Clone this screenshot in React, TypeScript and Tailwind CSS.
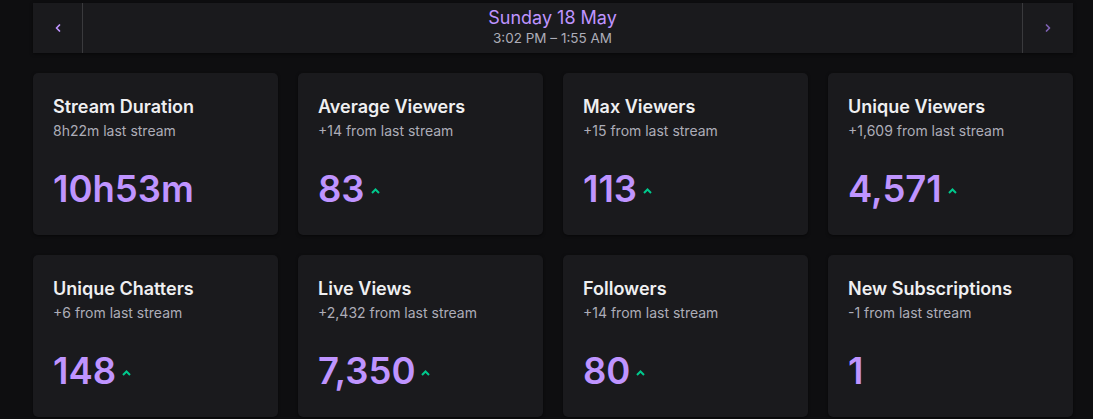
import { ChevronLeft, ChevronRight } from "lucide-react";

interface Stat {
  title: string;
  change: string;
  value: string;
  up?: boolean;
}

const stats: Stat[] = [
  { title: "Stream Duration", change: "8h22m last stream", value: "10h53m" },
  { title: "Average Viewers", change: "+14 from last stream", value: "83", up: true },
  { title: "Max Viewers", change: "+15 from last stream", value: "113", up: true },
  { title: "Unique Viewers", change: "+1,609 from last stream", value: "4,571", up: true },
  { title: "Unique Chatters", change: "+6 from last stream", value: "148", up: true },
  { title: "Live Views", change: "+2,432 from last stream", value: "7,350", up: true },
  { title: "Followers", change: "+14 from last stream", value: "80", up: true },
  { title: "New Subscriptions", change: "-1 from last stream", value: "1" },
];

function UpCaret() {
  return (
    <svg width="9" height="6" viewBox="0 0 9 6" className="ml-[6px] mt-[4px]">
      <path d="M1 5 L4.5 1.5 L8 5" fill="none" stroke="#00c98d" strokeWidth="2" />
    </svg>
  );
}

function StatCard({ stat }: { stat: Stat }) {
  return (
    <div className="bg-[#1a1a1d] rounded-[5px] h-[162px] pl-[20px] pt-[22px] shadow-[0_1px_3px_rgba(0,0,0,0.5)]">
      <h2 className="text-[18px] leading-[23px] font-semibold text-[#efeff1]">{stat.title}</h2>
      <p className="text-[14px] leading-[20px] text-[#adadb8] mt-[3px]">{stat.change}</p>

      <div className="flex items-center mt-[26px]">
        <span className="text-[36.5px] leading-[44px] font-semibold text-[#bf94ff]">{stat.value}</span>
        {stat.up && <UpCaret />}
      </div>
    </div>
  );
}

export default function App() {
  return (
    <div
      className="h-[419px] overflow-hidden bg-[#0e0e10] pl-[33px] pr-[20px] pt-[3px]"
      style={{ fontFamily: "Inter, 'Noto Sans', sans-serif" }}
    >
      <div className="flex h-[50px] bg-[#1a1a1d] shadow-[0_1px_3px_rgba(0,0,0,0.5)]">
        <button className="w-[50px] flex items-center justify-center border-r border-[#3a3a3d] text-[#bf94ff]">
          <ChevronLeft size={12} strokeWidth={3.5} />
        </button>

        <div className="flex-1 flex flex-col items-center justify-center">
          <div className="text-[18px] leading-[22px] text-[#bf94ff] -mt-[2px]">Sunday 18 May</div>
          <div className="text-[13.5px] leading-[18px] text-[#adadb8]">3:02 PM – 1:55 AM</div>
        </div>

        <button className="w-[51px] flex items-center justify-center border-l border-[#3a3a3d] text-[#7e62b3]">
          <ChevronRight size={12} strokeWidth={3.5} />
        </button>
      </div>

      <div className="grid grid-cols-4 gap-[20px] mt-[20px]">
        {stats.map((s) => (
          <StatCard key={s.title} stat={s} />
        ))}
      </div>
    </div>
  );
}
